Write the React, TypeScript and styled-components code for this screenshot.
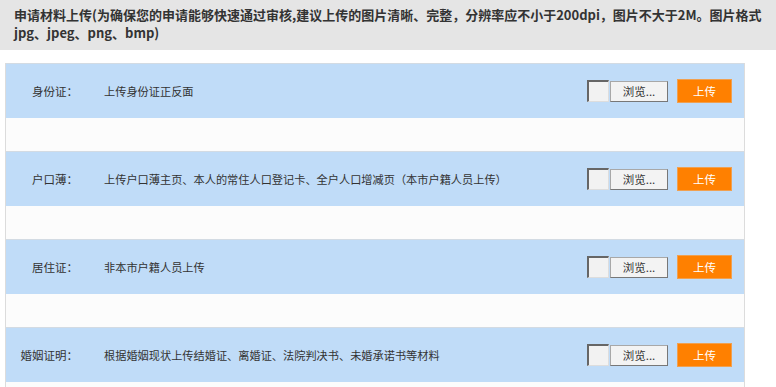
import React from "react";
import styled, { createGlobalStyle } from "styled-components";

const GlobalStyle = createGlobalStyle`
  html, body {
    margin: 0;
    padding: 0;
    background: #ffffff;
  }
  body {
    font-family: "Noto Sans CJK SC", "Noto Sans", sans-serif;
    color: #333;
  }
`;

const Page = styled.div`
  width: 776px;
  height: 387px;
  overflow: hidden;
  background: #fff;
`;

const Notice = styled.div`
  background: #e5e5e5;
  height: 50px;
  box-sizing: border-box;
  padding: 6px 0 0 14px;
  font-size: 13px;
  font-weight: bold;
  color: #333;
`;

const NoticeLine = styled.div`
  height: 18px;
  line-height: 18px;
  white-space: nowrap;
`;

const Panel = styled.div`
  margin: 13px 0 0 5px;
  width: 740px;
  box-sizing: border-box;
  border-left: 1px solid #dcdcdc;
  border-right: 1px solid #dcdcdc;
`;

const ItemRow = styled.div`
  height: 55px;
  box-sizing: border-box;
  background: #c0dcf8;
  border-top: 1px solid #d3dbe3;
  display: flex;
  align-items: center;
  padding-right: 12px;
`;

const Spacer = styled.div`
  height: 33px;
  background: #fcfcfc;
`;

const Label = styled.div`
  width: 72px;
  text-align: right;
  font-size: 11.5px;
  color: #333;
  flex: none;
`;

const Desc = styled.div`
  margin-left: 26px;
  font-size: 11.2px;
  color: #333;
  flex: 1;
  white-space: nowrap;
`;

const FileBox = styled.div`
  width: 22px;
  height: 22px;
  box-sizing: border-box;
  background: #f2f2f2;
  border-top: 2px solid #666;
  border-left: 2px solid #666;
  border-right: 1px solid #ddd;
  border-bottom: 1px solid #ddd;
  flex: none;
`;

const BrowseButton = styled.button`
  width: 58px;
  height: 21px;
  box-sizing: border-box;
  margin-left: 1px;
  background: #f3f3f3;
  border: 1px solid #a8a8a8;
  border-right-color: #777;
  border-bottom-color: #777;
  font-family: inherit;
  font-size: 11.5px;
  color: #333;
  padding: 0;
  line-height: 19px;
  flex: none;
`;

const UploadButton = styled.button`
  width: 55px;
  height: 24px;
  margin-left: 9px;
  background: #ff8000;
  border: 1px solid #f0a050;
  color: #fff;
  font-family: inherit;
  font-size: 11.5px;
  padding: 0;
  flex: none;
`;

const items = [
  { label: "身份证：", desc: "上传身份证正反面" },
  {
    label: "户口薄：",
    desc: "上传户口薄主页、本人的常住人口登记卡、全户人口增减页（本市户籍人员上传）",
  },
  { label: "居住证：", desc: "非本市户籍人员上传" },
  {
    label: "婚姻证明：",
    desc: "根据婚姻现状上传结婚证、离婚证、法院判决书、未婚承诺书等材料",
  },
];

export default function App() {
  return (
    <Page>
      <GlobalStyle />
      <Notice>
        <NoticeLine>
          申请材料上传(为确保您的申请能够快速通过审核,建议上传的图片清晰、完整，分辨率应不小于200dpi，图片不大于2M。图片格式
        </NoticeLine>
        <NoticeLine>jpg、jpeg、png、bmp)</NoticeLine>
      </Notice>
      <Panel>
        {items.map((it, i) => (
          <React.Fragment key={i}>
            <ItemRow>
              <Label>{it.label}</Label>
              <Desc>{it.desc}</Desc>
              <FileBox />
              <BrowseButton>浏览...</BrowseButton>
              <UploadButton>上传</UploadButton>
            </ItemRow>
            <Spacer />
          </React.Fragment>
        ))}
      </Panel>
    </Page>
  );
}
